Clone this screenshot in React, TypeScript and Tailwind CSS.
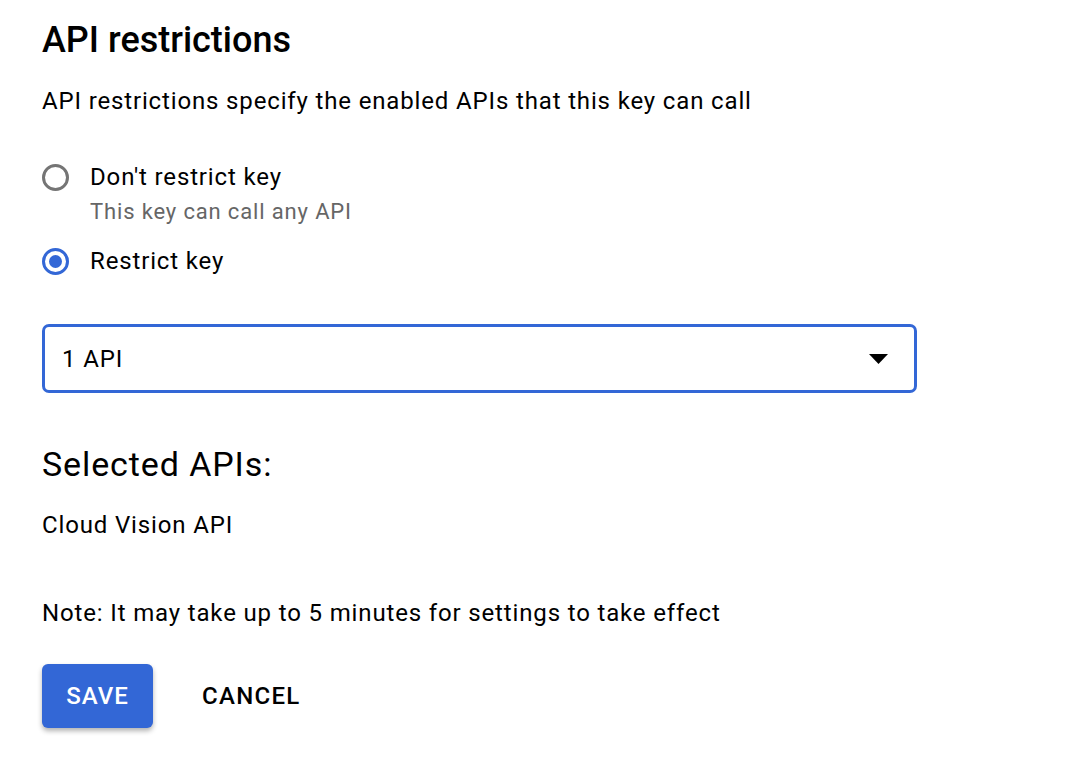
const Radio = ({ checked }: { checked: boolean }) => (
  <span
    className={
      "flex h-[27px] w-[27px] shrink-0 items-center justify-center rounded-full border-[3px] " +
      (checked ? "border-[#3367d6]" : "border-[#757575]")
    }
  >
    {checked && <span className="h-[13px] w-[13px] rounded-full bg-[#3367d6]" />}
  </span>
);

export default function App() {
  return (
    <div className="min-h-screen bg-white pl-[42px] pt-[16px] text-black [font-family:Roboto,'Liberation_Sans',sans-serif]">
      <h1 className="text-[36px] font-medium leading-[48px]">API restrictions</h1>
      <p className="mt-[21px] text-[24px] leading-[32px] tracking-[0.85px]">
        API restrictions specify the enabled APIs that this key can call
      </p>

      <div className="mt-[44px] flex flex-col">
        <label className="flex h-[32px] items-center gap-[21px]">
          <Radio checked={false} />
          <span className="text-[24px] leading-[32px] tracking-[0.85px]">Don't restrict key</span>
        </label>
        <div className="mt-[5px] pl-[48px] text-[22px] leading-[28px] tracking-[0.85px] text-[#666666]">
          This key can call any API
        </div>
        <label className="mt-[19px] flex h-[32px] items-center gap-[21px]">
          <Radio checked={true} />
          <span className="text-[24px] leading-[32px] tracking-[0.85px]">Restrict key</span>
        </label>
      </div>

      <div className="mt-[47px] flex h-[69px] w-[875px] items-center justify-between rounded-[7px] border-[3px] border-[#3367d6] pl-[17px] pr-[26px]">
        <span className="text-[24px] leading-[32px] tracking-[0.85px]">1 API</span>
        <svg width="19" height="10" viewBox="0 0 19 10">
          <path d="M0 0h19L9.5 10z" fill="#000" />
        </svg>
      </div>

      <h2 className="mt-[49px] text-[34px] leading-[44px] tracking-[0.9px]">Selected APIs:</h2>
      <p className="mt-[23px] text-[24px] leading-[32px] tracking-[0.85px]">Cloud Vision API</p>

      <p className="mt-[56px] text-[24px] leading-[32px] tracking-[0.85px]">
        Note: It may take up to 5 minutes for settings to take effect
      </p>

      <div className="mt-[35px] flex items-center">
        <button className="h-[64px] w-[111px] rounded-[6px] bg-[#3367d6] text-[24px] font-medium tracking-[1px] text-white shadow-[0_3px_5px_rgba(0,0,0,0.3)]">
          SAVE
        </button>
        <button className="ml-[25px] h-[64px] px-[24px] text-[24px] font-medium tracking-[1.3px]">CANCEL</button>
      </div>
    </div>
  );
}
